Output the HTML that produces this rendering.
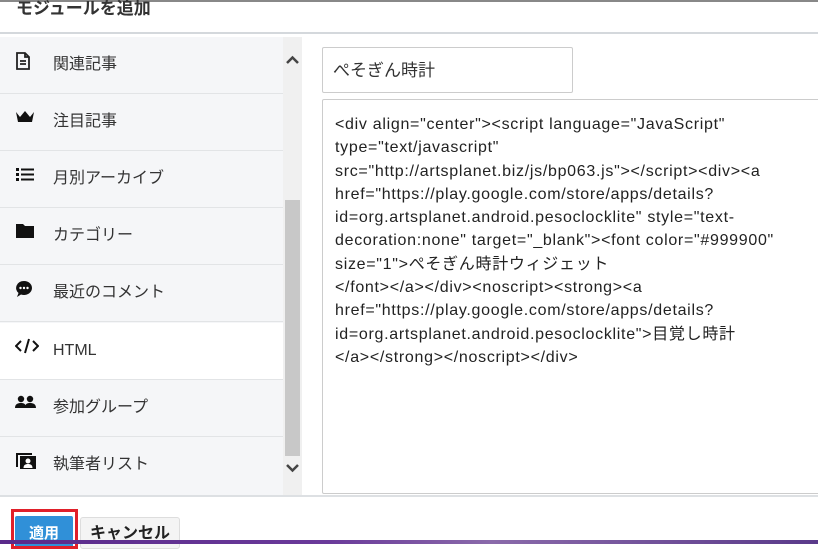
<!DOCTYPE html>
<html><head><meta charset="utf-8"><style>
*{margin:0;padding:0;box-sizing:border-box}
body{width:818px;height:544px;overflow:hidden;background:#fff;position:relative;font-family:"Liberation Sans","Noto Sans CJK JP",sans-serif;color:#333}
.topline{position:absolute;left:0;top:0;width:818px;height:2px;background:#888}
.title{position:absolute;left:16px;top:-6px;font-size:17px;font-weight:bold;color:#333}
.hline{position:absolute;left:0;top:32px;width:818px;height:2px;background:#d4d8dc}
.list{position:absolute;left:0;top:37px;width:283px;height:458px;background:#f5f6f8}
.item{position:absolute;left:0;width:283px;height:57px;border-bottom:1px solid #e2e4e6;font-size:16px}
.item span{position:absolute;left:53px;top:20px;line-height:1}
.item svg{position:absolute;left:15px;top:15px}
.sb{position:absolute;left:283px;top:37px;width:19px;height:458px;background:#f0f0f0}
.thumb{position:absolute;left:285px;top:200px;width:15px;height:256px;background:#c8c8c8}
.inp{position:absolute;left:322px;top:47px;width:251px;height:46px;border:1px solid #ccc;border-radius:2px;font-size:17px;line-height:1;padding:14px 10px}
.ta{position:absolute;left:322px;top:99px;width:500px;height:395px;border:1px solid #ccc;border-radius:2px;font-family:"Liberation Sans","Noto Sans CJK JP",sans-serif;font-size:16px;line-height:23.3px;padding:13px 12px;white-space:nowrap;letter-spacing:0.7px;color:#222}
.bline{position:absolute;left:0;top:495px;width:818px;height:2px;background:#dde0e3}
.red{position:absolute;left:11px;top:509px;width:67px;height:40px;border:3px solid #e0202a}
.ok{position:absolute;left:15px;top:516px;width:58px;height:32px;background:#3090d8;color:#fff;font-weight:bold;font-size:15px;line-height:1;text-align:center;padding-top:10px;border-radius:2px}
.cancel{position:absolute;left:80px;top:517px;width:100px;height:32px;background:#f4f4f4;border:1px solid #ddd;border-radius:3px;font-weight:bold;font-size:16px;line-height:1;text-align:center;padding-top:8px;color:#222}
.purple{position:absolute;left:0;top:540px;width:818px;height:4px;background:linear-gradient(90deg,#5a2a8a,#6a3a9a 40%,#8a6aaa 60%,#5a3a8a)}
</style></head><body>
<div class="topline"></div>
<div class="title">モジュールを追加</div>
<div class="hline"></div>
<div class="list">
<div class="item" style="top:0"><svg width="16" height="18" viewBox="0 0 16 18"><path d="M2 1h8l4 4v12H2z M10 1v4h4 M5 9h6 M5 12h6" fill="none" stroke="#222" stroke-width="1.8"/></svg><span>関連記事</span></div>
<div class="item" style="top:57px"><svg width="20" height="16" viewBox="0 0 20 16"><path d="M1 3l4 5 5-6 5 6 4-5-2 10H3z" fill="#111"/></svg><span>注目記事</span></div>
<div class="item" style="top:114px"><svg width="20" height="16" viewBox="0 0 20 16"><path d="M1 2h3v3H1zM1 7h3v3H1zM1 12h3v3H1zM6 2.5h13v2H6zM6 7.5h13v2H6zM6 12.5h13v2H6z" fill="#111"/></svg><span>月別アーカイブ</span></div>
<div class="item" style="top:171px"><svg width="20" height="16" viewBox="0 0 20 16"><path d="M1 1h7l2 2h9v12H1z" fill="#111"/></svg><span>カテゴリー</span></div>
<div class="item" style="top:228px"><svg width="20" height="18" viewBox="0 0 20 18"><path d="M9 1a8 7 0 1 1-3 13.5L2 17l1.5-4A8 7 0 0 1 9 1z" fill="#111"/><circle cx="5.5" cy="8" r="1.2" fill="#fff"/><circle cx="9" cy="8" r="1.2" fill="#fff"/><circle cx="12.5" cy="8" r="1.2" fill="#fff"/></svg><span>最近のコメント</span></div>
<div class="item" style="top:286px;background:#fff"><svg width="24" height="16" viewBox="0 0 24 16"><path d="M6 3L1 8l5 5M18 3l5 5-5 5M14 1L10 15" fill="none" stroke="#111" stroke-width="2"/></svg><span>HTML</span></div>
<div class="item" style="top:343px"><svg width="22" height="16" viewBox="0 0 22 16"><circle cx="6" cy="4" r="3.2" fill="#111"/><circle cx="15" cy="4" r="3.2" fill="#111"/><path d="M0 13c0-4 3-5 6-5s5 1 5 5zM10 13c0-4 2-5 5-5s6 1 6 5z" fill="#111"/></svg><span>参加グループ</span></div>
<div class="item" style="top:400px;border-bottom:none"><svg width="22" height="18" viewBox="0 0 22 18"><path d="M1 1h16v2H3v12H1z" fill="#111"/><rect x="5" y="4" width="16" height="13" fill="#111"/><circle cx="13" cy="9" r="2.5" fill="#fff"/><path d="M8.5 16c0-3 2-4 4.5-4s4.5 1 4.5 4z" fill="#fff"/></svg><span>執筆者リスト</span></div>
</div>
<div class="sb"></div>
<div class="thumb"></div>
<svg style="position:absolute;left:285px;top:54px" width="15" height="12" viewBox="0 0 15 12"><path d="M2 9l5.5-5.5L13 9" fill="none" stroke="#444" stroke-width="2.5"/></svg>
<svg style="position:absolute;left:285px;top:462px" width="15" height="12" viewBox="0 0 15 12"><path d="M2 3l5.5 5.5L13 3" fill="none" stroke="#444" stroke-width="2.5"/></svg>
<div class="inp">ぺそぎん時計</div>
<div class="ta">&lt;div align="center"&gt;&lt;script language="JavaScript"<br>type="text/javascript"<br>src="http://artsplanet.biz/js/bp063.js"&gt;&lt;/script&gt;&lt;div&gt;&lt;a<br>href="https://play.google.com/store/apps/details?<br>id=org.artsplanet.android.pesoclocklite" style="text-<br>decoration:none" target="_blank"&gt;&lt;font color="#999900"<br>size="1"&gt;ぺそぎん時計ウィジェット<br>&lt;/font&gt;&lt;/a&gt;&lt;/div&gt;&lt;noscript&gt;&lt;strong&gt;&lt;a<br>href="https://play.google.com/store/apps/details?<br>id=org.artsplanet.android.pesoclocklite"&gt;目覚し時計<br>&lt;/a&gt;&lt;/strong&gt;&lt;/noscript&gt;&lt;/div&gt;</div>
<div class="bline"></div>
<div class="ok">適用</div>
<div class="red"></div>
<div class="cancel">キャンセル</div>
<div class="purple"></div>
</body></html>
